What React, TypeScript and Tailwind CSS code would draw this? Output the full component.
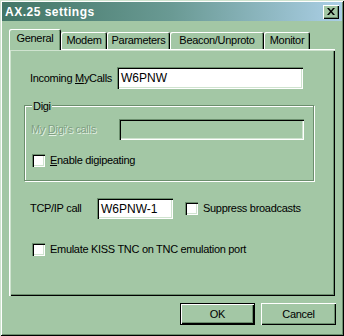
const BG = "bg-[#a3c7a5]";

function Checkbox({ label }: { label: React.ReactNode }) {
  return (
    <div className="flex items-center">
      <div className="w-[13px] h-[13px] bg-white shadow-[inset_1px_1px_0_#6b8e6d,inset_2px_2px_0_#000,inset_-1px_-1px_0_#fff,inset_-2px_-2px_0_#cfe3cf]" />
      <span className="ml-[5px]">{label}</span>
    </div>
  );
}

function Tab({ label, w, selected }: { label: string; w: string; selected?: boolean }) {
  return (
    <div
      className={
        (selected
          ? "h-[21px] -mb-px z-10 pb-[2px] "
          : "h-[17px] ") +
        w +
        " " +
        BG +
        " flex items-center justify-center rounded-t-[2px] shadow-[inset_1px_1px_0_#fff,inset_-1px_0_0_#000,inset_-2px_0_0_#6b8e6d]"
      }
    >
      {label}
    </div>
  );
}

const sunken =
  "shadow-[inset_1px_1px_0_#6b8e6d,inset_2px_2px_0_#000,inset_-1px_-1px_0_#fff,inset_-2px_-2px_0_#cfe3cf]";

export default function App() {
  return (
    <div
      className={
        "w-[344px] h-[336px] p-[2px] flex flex-col text-[11px] tracking-[-0.3px] text-black " +
        BG +
        " shadow-[inset_1px_1px_0_#cfe3cf,inset_-1px_-1px_0_#000,inset_2px_2px_0_#fff,inset_-2px_-2px_0_#6b8e6d]"
      }
      style={{ fontFamily: '"Liberation Sans", Arial, sans-serif' }}
    >
      {/* Title bar */}
      <div className="h-[19px] flex items-center justify-between bg-gradient-to-r from-[#427666] via-[#6a9a94] to-[#abcfe6] pl-[3px] pr-[3px]">
        <span className="text-white font-bold text-[12px] tracking-[0.5px]">AX.25 settings</span>
        <div
          className={
            "w-[16px] h-[14px] flex items-center justify-center " +
            BG +
            " shadow-[inset_1px_1px_0_#fff,inset_-1px_-1px_0_#000,inset_-2px_-2px_0_#6b8e6d]"
          }
        >
          <svg width="8" height="7" viewBox="0 0 8 7">
            <path d="M0 0h2l2 2.5L6 0h2L5 3.5 8 7H6L4 4.5 2 7H0l3-3.5z" fill="#000" />
          </svg>
        </div>
      </div>

      {/* Tabs */}
      <div className="flex items-end ml-[7px] mt-[8px] h-[20px]">
        <Tab label="General" w="w-[52px]" selected />
        <Tab label="Modem" w="w-[46px]" />
        <Tab label="Parameters" w="w-[63px]" />
        <Tab label="Beacon/Unproto" w="w-[94px]" />
        <Tab label="Monitor" w="w-[46px]" />
      </div>

      {/* Panel */}
      <div className="ml-[7px] w-[326px] h-[247px] pt-[18px] shadow-[inset_1px_1px_0_#fff,inset_2px_2px_0_#cfe3cf,inset_-1px_-1px_0_#000,inset_-2px_-2px_0_#6b8e6d] flex flex-col">
        <div className="flex items-center pl-[21px]">
          <span className="w-[87px]">
            Incoming <u>M</u>yCalls
          </span>
          <div className={"w-[186px] h-[22px] bg-white flex items-center pl-[4px] text-[12px] tracking-normal " + sunken}>W6PNW</div>
        </div>

        {/* Digi group */}
        <div className="relative ml-[15px] mt-[16px] w-[290px] h-[76px] border border-[#6b8e6d] shadow-[inset_1px_1px_0_#fff,1px_1px_0_#fff] pt-[13px]">
          <span className={"absolute -top-[8px] left-[7px] px-[1px] " + BG}>Digi</span>
          <div className="flex items-center pl-[6px]">
            <span className="w-[88px] text-[#7f9f83] [text-shadow:1px_1px_0_#e6f2e6]">
              My <u>D</u>igi's calls
            </span>
            <div className={"w-[185px] h-[21px] " + sunken} />
          </div>
          <div className="ml-[7px] mt-[12px]">
            <Checkbox label={<><u>E</u>nable digipeating</>} />
          </div>
        </div>

        <div className="flex items-center pl-[21px] mt-[17px]">
          <span className="w-[67px]">TCP/IP call</span>
          <div className={"w-[76px] h-[21px] bg-white flex items-center pl-[4px] text-[12px] tracking-normal " + sunken}>W6PNW-1</div>
          <div className="ml-[12px]">
            <Checkbox label="Suppress broadcasts" />
          </div>
        </div>

        <div className="ml-[23px] mt-[22px]">
          <Checkbox label="Emulate KISS TNC on TNC emulation port" />
        </div>
      </div>

      {/* Buttons */}
      <div className="flex justify-end gap-[6px] mt-[7px] pr-[6px]">
        <div className="w-[75px] h-[22px] border border-black flex">
          <div className="flex-1 flex items-center justify-center shadow-[inset_1px_1px_0_#fff,inset_-1px_-1px_0_#000,inset_-2px_-2px_0_#6b8e6d]">
            OK
          </div>
        </div>
        <div className="w-[75px] h-[22px] flex items-center justify-center shadow-[inset_1px_1px_0_#fff,inset_-1px_-1px_0_#000,inset_-2px_-2px_0_#6b8e6d]">
          Cancel
        </div>
      </div>
    </div>
  );
}
